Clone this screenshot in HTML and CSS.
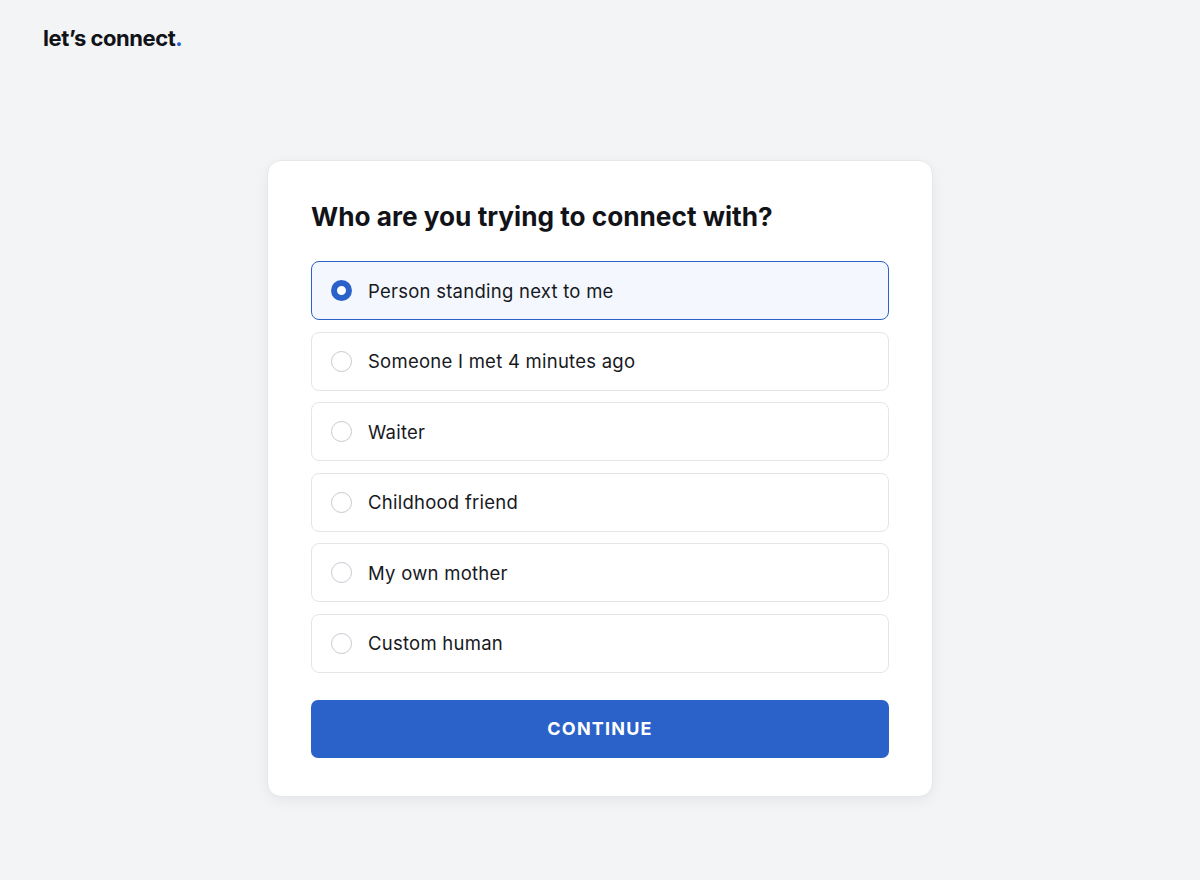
FILE: index.html
```html
<!DOCTYPE html>
<html lang="en">
<head>
<meta charset="utf-8">
<title>let's connect.</title>
<link rel="stylesheet" href="styles.css">
</head>
<body>
<header class="top">
  <div class="logo">let’s connect<span class="dot">.</span></div>
</header>
<main class="stage">
  <form class="card">
    <h1 class="title">Who are you trying to connect with?</h1>
    <div class="options">
      <label class="option selected"><span class="radio"></span><span class="label">Person standing next to me</span></label>
      <label class="option"><span class="radio"></span><span class="label">Someone I met 4 minutes ago</span></label>
      <label class="option"><span class="radio"></span><span class="label">Waiter</span></label>
      <label class="option"><span class="radio"></span><span class="label">Childhood friend</span></label>
      <label class="option"><span class="radio"></span><span class="label">My own mother</span></label>
      <label class="option"><span class="radio"></span><span class="label">Custom human</span></label>
    </div>
    <button type="button" class="continue">CONTINUE</button>
  </form>
</main>
</body>
</html>
```
FILE: styles.css
```css
* { box-sizing: border-box; }
html, body { margin: 0; padding: 0; }
body {
  background: #f3f4f6;
  font-family: Inter, "Noto Sans", sans-serif;
  color: #111318;
  min-height: 880px;
}
.top {
  padding: 24px 43px 0;
  height: 160px;
}
.logo {
  font-size: 22px;
  font-weight: 700;
  letter-spacing: -0.45px;
  line-height: 28px;
}
.dot { color: #2a62c9; }
.stage {
  display: flex;
  justify-content: center;
}
.card {
  width: 666px;
  background: #fff;
  border: 1px solid #e6e7ea;
  border-radius: 14px;
  box-shadow: 0 4px 14px rgba(20, 24, 40, 0.06);
  padding: 40px 43px 38px;
  display: flex;
  flex-direction: column;
}
.title {
  margin: 0 0 28px;
  font-size: 26.2px;
  line-height: 32px;
  font-weight: 700;
  letter-spacing: 0;
  color: #111318;
}
.options {
  display: flex;
  flex-direction: column;
  gap: 11.6px;
}
.option {
  height: 59px;
  display: flex;
  align-items: center;
  gap: 16px;
  padding: 0 19px;
  border: 1px solid #e3e5e8;
  border-radius: 8px;
  background: #fff;
  font-size: 18.5px;
  letter-spacing: 0.25px;
  color: #17191e;
}
.option.selected {
  border-color: #2a62c9;
  background: #f4f7fd;
}
.radio {
  width: 21px;
  height: 21px;
  border-radius: 50%;
  border: 1.5px solid #c6c9cf;
  flex: none;
  background: #fff;
}
.selected .radio {
  border: 6px solid #2a62c9;
  background: #fff;
}
.continue {
  margin-top: 27px;
  height: 58px;
  border: 0;
  border-radius: 7px;
  background: #2a62c9;
  color: #fff;
  font-family: inherit;
  font-size: 18px;
  font-weight: 700;
  letter-spacing: 1.2px;
}
```
